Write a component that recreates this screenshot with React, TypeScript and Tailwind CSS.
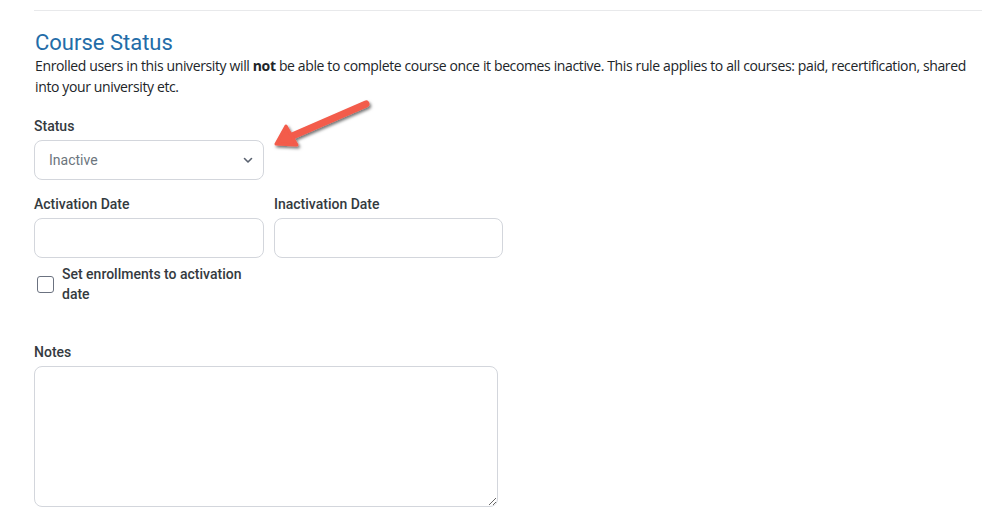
import React from "react";

const Arrow = () => (
  <svg
    className="absolute left-[268px] top-[96px]"
    width="110"
    height="60"
    viewBox="0 0 110 60"
  >
    <defs>
      <filter id="sh" x="-20%" y="-40%" width="150%" height="180%">
        <feDropShadow dx="1.5" dy="2" stdDeviation="1.5" floodColor="#000" floodOpacity="0.55" />
      </filter>
    </defs>
    <g filter="url(#sh)" fill="#f35b4b" stroke="#f35b4b" strokeLinecap="round" strokeLinejoin="round">
      <line x1="98" y1="8" x2="22" y2="41" strokeWidth="7" />
      <polygon points="8,48 18,30 29,49" strokeWidth="3" />
    </g>
  </svg>
);

const Label = ({ children }: { children: React.ReactNode }) => (
  <label className="block text-[14px] font-medium text-[#343a40] mb-[4px] leading-[20px]">{children}</label>
);

export default function App() {
  return (
    <div className="relative min-h-[516px] bg-white pl-[34px] pr-[8px] pt-[10px] font-['Roboto',sans-serif]">
      <Arrow />
      <div className="border-t border-[#e8e9eb]" />
      <h2 className="mt-[20px] text-[22px] leading-[24px] text-[#236ca8] pl-[1px]">Course Status</h2>
      <p className="pl-[1px] text-[14px] leading-[21px] text-[#212529] font-['Open_Sans',sans-serif] tracking-[-0.37px]">
        Enrolled users in this university will <b>not</b> be able to complete course once it becomes inactive. This rule
        applies to all courses: paid, recertification, shared into your university etc.
      </p>

      <div className="mt-[19px] w-[230px]">
        <Label>Status</Label>
        <div className="flex h-[40px] items-center justify-between rounded-[8px] border border-[#d3d6dc] pl-[14px] pr-[9px]">
          <span className="text-[14px] text-[#6c757d]">Inactive</span>
          <svg width="12" height="12" viewBox="0 0 12 12" fill="none">
            <path d="M2.5 4.5 6 8l3.5-3.5" stroke="#5a6270" strokeWidth="1.6" strokeLinecap="round" strokeLinejoin="round" />
          </svg>
        </div>
      </div>

      <div className="mt-[14px] flex gap-[10px]">
        <div className="w-[230px]">
          <Label>Activation Date</Label>
          <div className="h-[40px] rounded-[8px] border border-[#d3d6dc]" />
          <label className="mt-[6px] flex items-center gap-[8px]">
            <span className="h-[17px] w-[17px] shrink-0 rounded-[3px] border-[1.5px] border-[#6b7280] ml-[3px]" />
            <span className="text-[14px] font-medium leading-[20px] text-[#343a40] pr-[10px]">
              Set enrollments to activation date
            </span>
          </label>
        </div>
        <div className="w-[229px]">
          <Label>Inactivation Date</Label>
          <div className="h-[40px] rounded-[8px] border border-[#d3d6dc]" />
        </div>
      </div>

      <div className="mt-[38px] w-[464px]">
        <Label>Notes</Label>
        <textarea className="block h-[141px] w-full rounded-[8px] border border-[#d3d6dc] outline-none" />
      </div>
    </div>
  );
}
